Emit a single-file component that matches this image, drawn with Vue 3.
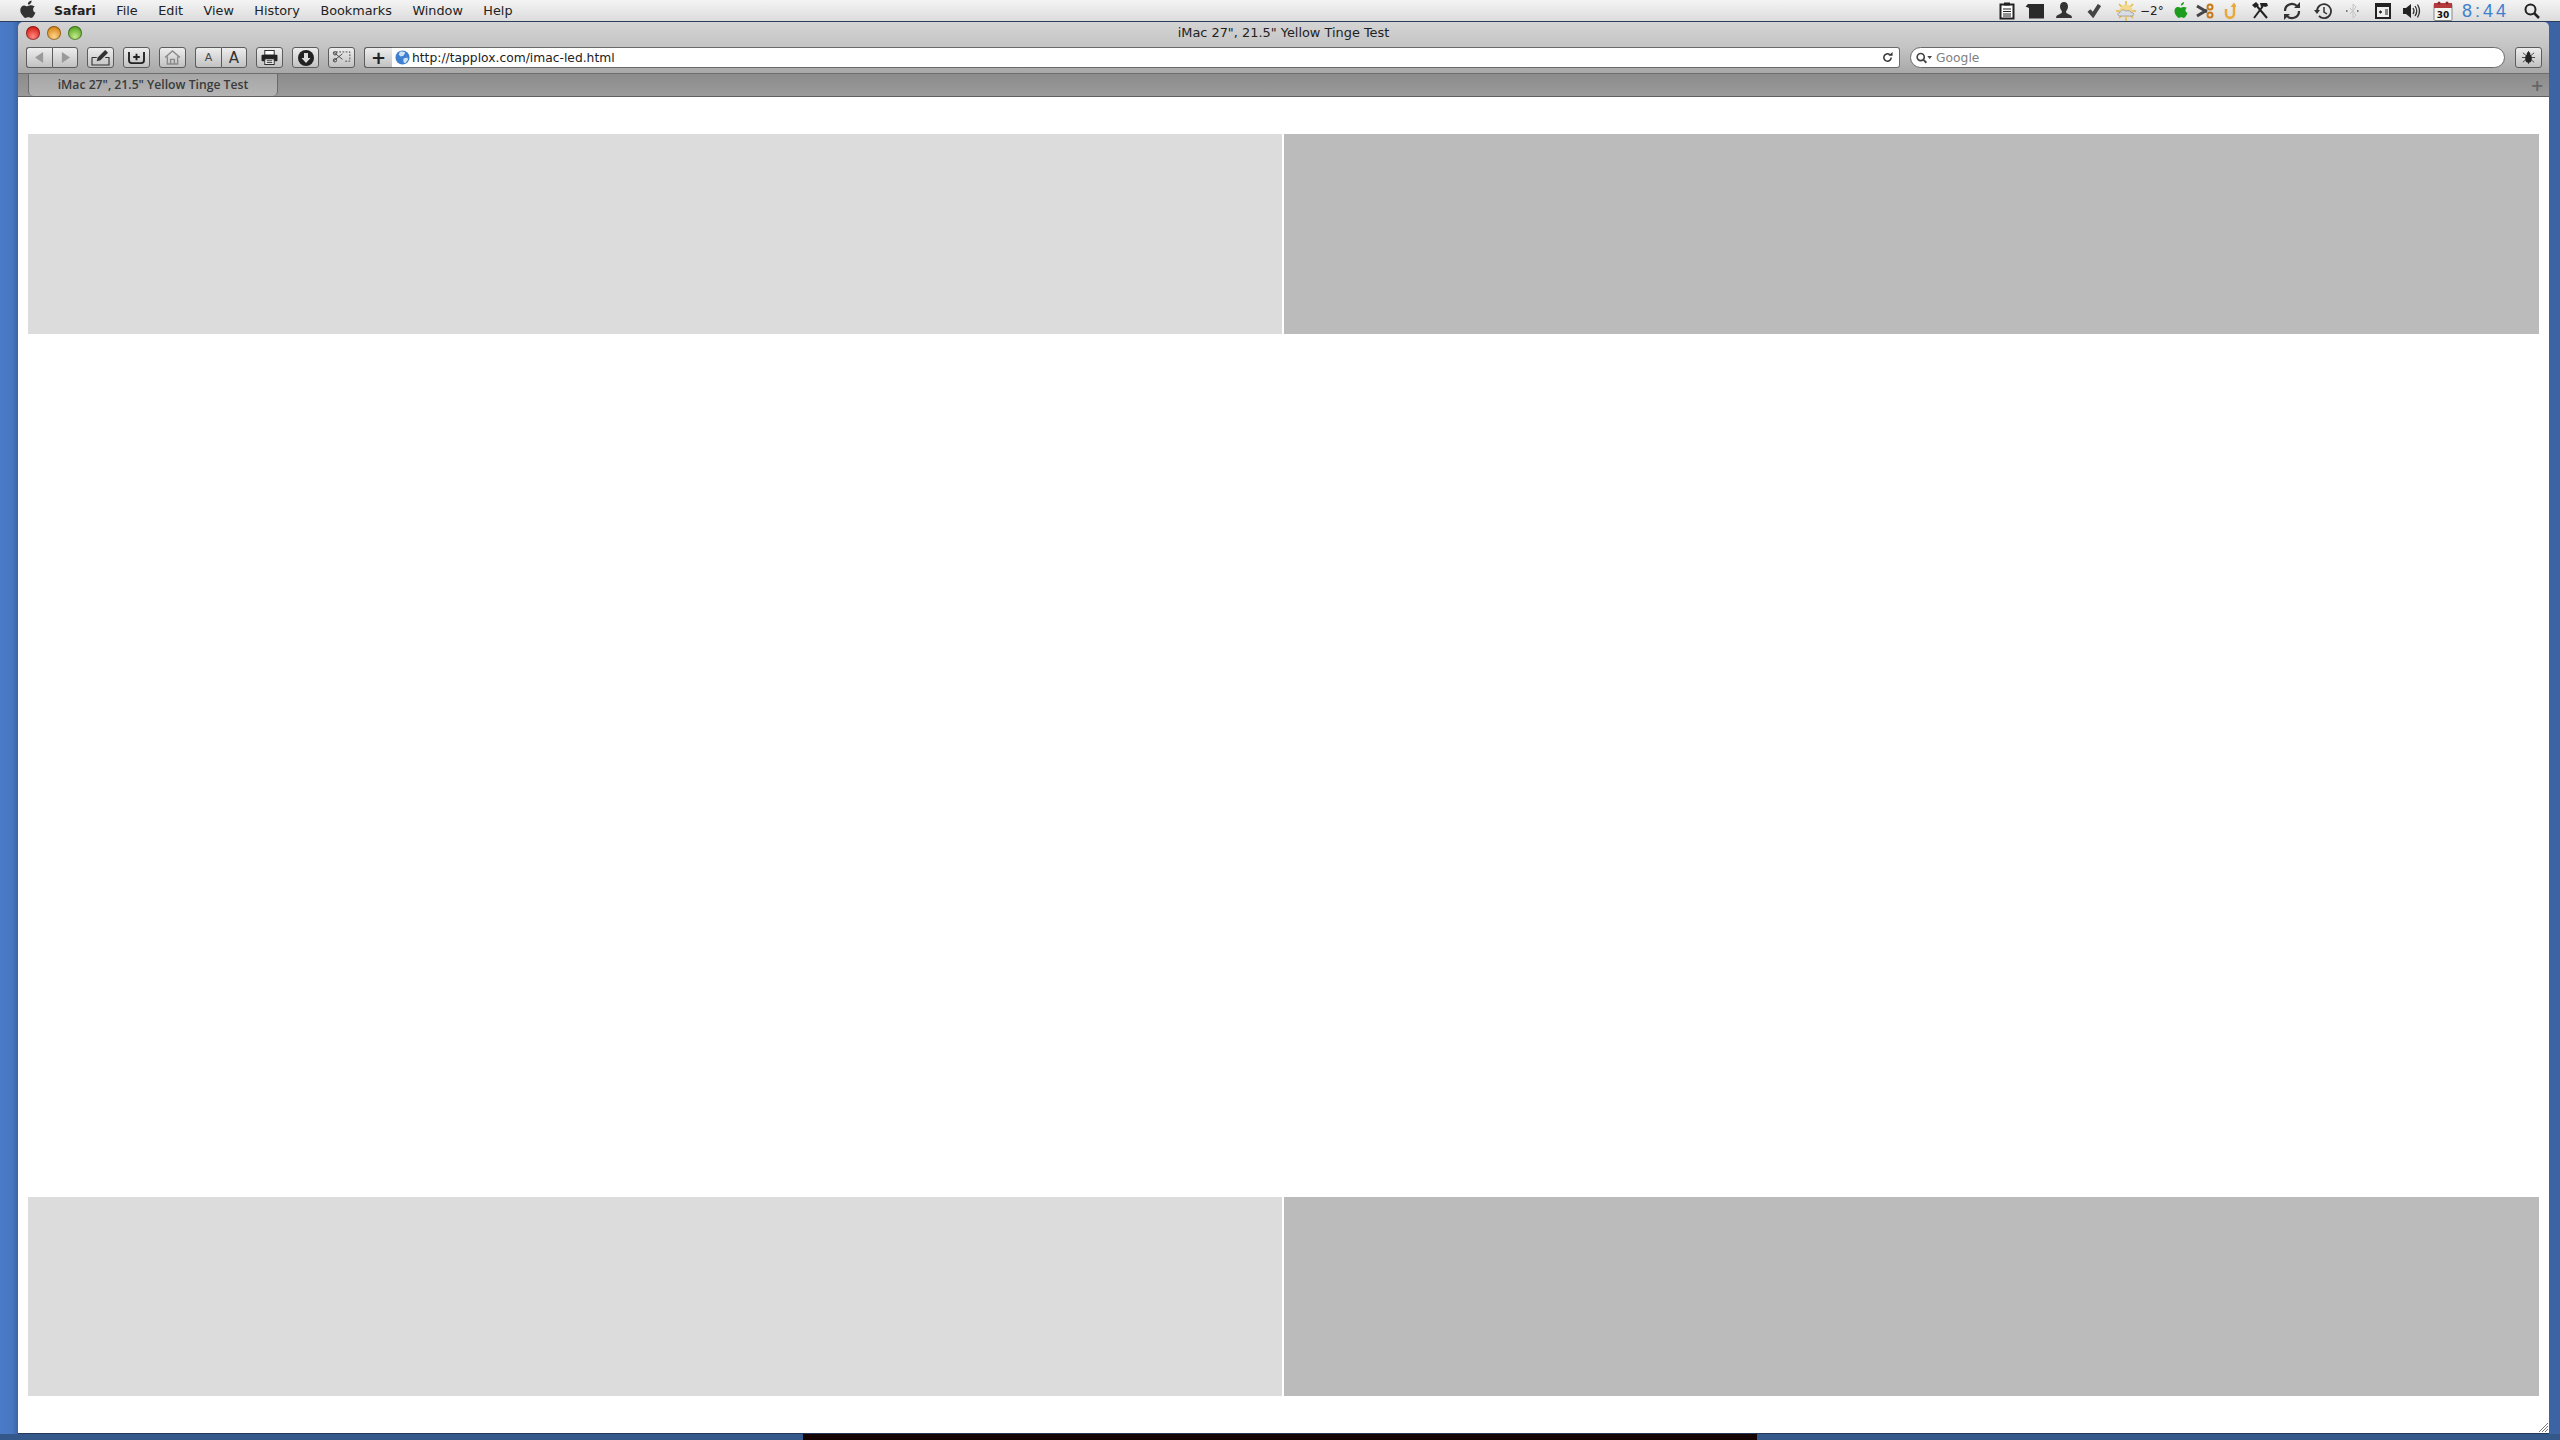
<template>
  <div class="desktop">
    <!-- Menu bar -->
    <header class="menubar">
      <svg class="apple" viewBox="0 0 16 19" width="16" height="19">
        <path fill="#333" d="M11.6 0.4c.1 1.2-.3 2.2-1 3-.7.8-1.700 1.300-2.700 1.200-.1-1.100.4-2.200 1-2.900C9.600 1 10.700.5 11.600.4zM14.800 6.400c-1.100.7-1.700 1.700-1.700 3 0 1.500.9 2.600 2.300 3.200-.4 1.200-.9 2.300-1.700 3.400-.8 1.100-1.500 2-2.600 2-1.100 0-1.500-.7-2.800-.7-1.300 0-1.800.7-2.800.7-1.100 0-1.900-1-2.700-2.200C1 14.100.3 12 .3 10.100c0-3 1.900-4.700 3.900-4.700 1.200 0 2.200.8 3 .8.700 0 1.900-.9 3.300-.9 1 0 2.900.4 4.300 1.100z"/>
      </svg>
      <nav class="menus">
        <span class="menu-app">Safari</span>
        <span v-for="m in menus" :key="m">{{ m }}</span>
      </nav>
      <div class="tray">
        <svg class="ti g0" viewBox="0 0 16 18" width="16" height="18"><rect x="1.500" y="2.500" width="13" height="14" fill="#fff" stroke="#222" stroke-width="2"/><rect x="5" y="0.500" width="6" height="3" fill="#222"/><path stroke="#222" d="M4 7h8M4 9.500h8M4 12h8M4 14h8"/></svg>
        <svg class="ti g10" viewBox="0 0 20 16" width="20" height="16"><path fill="#2a2a2a" d="M3 1h16v14.500H4V5L0.500 3.500z"/></svg>
        <svg class="ti g10" viewBox="0 0 18 18" width="18" height="18"><path fill="#333" d="M9 0c2.500 0 4 2 4 4.500 0 2-1 3.500-2 5 0 1.500 1 2 3 3 2 .8 3 1.500 3 3.500H1c0-2 1-2.700 3-3.500 2-1 3-1.500 3-3-1-1.500-2-3-2-5C5 2 6.500 0 9 0z"/></svg>
        <svg class="ti g14" viewBox="0 0 14 14" width="14" height="14"><path fill="none" stroke="#444" stroke-width="4" d="M2 6.500l4 4.500L12.500 1"/></svg>
        <svg class="ti g15" viewBox="0 0 20 20" width="20" height="20">
          <g stroke="#e3b93f" stroke-width="1.500"><path d="M10 0v20M0 10h20M3 3l14 14M17 3L3 17"/></g>
          <circle cx="10" cy="10" r="6.500" fill="#f2d98c"/>
          <path fill="#d9dde2" stroke="#8f8f8f" stroke-width=".7" d="M4 15c-3 0-3-3.500 0-3.500.5-2.500 4-3.500 6-1.500 2.500-1 5 0 5 1.500 3.500 0 3.500 3.500 1 3.500z"/>
        </svg>
        <span class="temp">−2°</span>
        <svg class="ti g13" viewBox="0 0 14 18" width="14" height="18"><path fill="#1e9c1e" d="M10 0c.1 1-.3 2-.9 2.600-.6.700-1.500 1.100-2.300 1 0-1 .4-1.800.9-2.400C8.300.6 9.300.1 10 0zM13 5.700c-1 .6-1.500 1.500-1.500 2.600 0 1.300.8 2.200 2 2.800-.3 1-.8 2-1.500 3-.7 1-1.300 1.800-2.300 1.800-1 0-1.300-.6-2.400-.6-1.100 0-1.500.6-2.400.6-1 0-1.600-.9-2.300-1.900C1 12.500.5 10.700.5 9c0-2.600 1.600-4 3.300-4 1 0 1.900.7 2.600.7.600 0 1.600-.8 2.900-.8.900 0 2.500.3 3.700.8z"/></svg>
        <svg class="ti g8" viewBox="0 0 18 16" width="18" height="16"><path stroke="#444" stroke-width="3" fill="none" d="M1 3l10 6M1 13l10-6"/><circle cx="14" cy="4" r="2.500" fill="none" stroke="#c77a1a" stroke-width="2"/><circle cx="14" cy="12" r="2.500" fill="none" stroke="#c77a1a" stroke-width="2"/></svg>
        <svg class="ti g10" viewBox="0 0 12 18" width="12" height="18"><path fill="none" stroke="#e8a93a" stroke-width="2.500" d="M2 7v5c0 5 8 5 8 0V3"/><path fill="#e8a93a" d="M6.500 5L10 .5 13 5z"/></svg>
        <svg class="ti g15" viewBox="0 0 18 18" width="18" height="18"><path stroke="#222" stroke-width="2" fill="none" d="M5 3l11 13M12 4L3 16"/><path fill="#222" d="M1 3l4-3 3 3-4 3zM9 1h7l1 3-3 1-2-1-2 1z"/></svg>
        <svg class="ti g14" viewBox="0 0 18 18" width="18" height="18"><g fill="none" stroke="#333" stroke-width="2.200"><path d="M2 9a7 7 0 0 1 12-5"/><path d="M16 9a7 7 0 0 1-12 5"/></g><path fill="#333" d="M11 6h6V0zM7 12H1v6z"/></svg>
        <svg class="ti g13" viewBox="0 0 18 18" width="18" height="18"><path fill="none" stroke="#333" stroke-width="1.800" d="M3 9a7 7 0 1 1 2 5"/><path fill="#333" d="M0 8h6l-3 4z"/><path fill="none" stroke="#333" stroke-width="1.500" d="M10 5v5l3 2"/></svg>
        <svg class="ti g14" viewBox="0 0 14 16" width="14" height="16"><path fill="none" stroke="#c4c4c4" d="M7 1v14l3-3-6-7M7 1l3 3-6 7"/><path stroke="#555" stroke-width="1.500" stroke-dasharray="1.500 1.500" d="M0 8h3M11 8h3"/></svg>
        <svg class="ti g15" viewBox="0 0 16 16" width="16" height="16"><rect x="1" y="1" width="14" height="14" fill="#eee" stroke="#222" stroke-width="2"/><rect x="1" y="1" width="14" height="3" fill="#222"/><path stroke="#222" d="M4 9h3M5.500 7.500v3M4.500 8l2 2M6.500 8l-2 2M10 7h3M10 9h3M10 11h3"/></svg>
        <svg class="ti g12" viewBox="0 0 18 16" width="18" height="16"><path fill="#222" d="M0 5h3l5-4v14l-5-4H0z"/><g fill="none" stroke="#333" stroke-width="1.300"><path d="M10 5q2 3 0 6"/><path d="M12 3q3.500 5 0 10"/><path d="M14.500 1.500q4 6.500 0 13"/></g></svg>
        <svg class="ti g12" viewBox="0 0 20 20" width="20" height="20"><rect x="1" y="3" width="18" height="16.500" rx="1" fill="#f4f4f0" stroke="#888"/><rect x="1" y="2" width="18" height="5" fill="#b5393a"/><circle cx="6" cy="2" r="1.500" fill="#8a2a2a"/><circle cx="14" cy="2" r="1.500" fill="#8a2a2a"/><text x="10" y="17" text-anchor="middle" class="cal-day">30</text></svg>
        <span class="clock">8:44</span>
        <svg class="ti g15" viewBox="0 0 16 16" width="16" height="16"><circle cx="6.500" cy="6.500" r="5" fill="none" stroke="#222" stroke-width="2"/><path stroke="#222" stroke-width="2.500" d="M10 10l5 5"/></svg>
      </div>
    </header>

    <!-- Safari window -->
    <main class="window">
      <div class="titlebar">
        <div class="lights">
          <span class="light red"></span>
          <span class="light amber"></span>
          <span class="light green"></span>
        </div>
        <span class="title">iMac 27", 21.5" Yellow Tinge Test</span>
      </div>

      <div class="toolbar">
        <div class="btn-group nav-group">
          <button class="btn seg"><svg viewBox="0 0 10 12" width="9" height="11"><path fill="#9a9a9a" d="M9 0v12L0 6z"/></svg></button>
          <button class="btn seg"><svg viewBox="0 0 10 12" width="9" height="11"><path fill="#9a9a9a" d="M1 0v12l9-6z"/></svg></button>
        </div>
        <button class="btn"><svg viewBox="0 0 20 18" width="19" height="17"><path fill="none" stroke="#333" stroke-width="1.200" d="M1 9v8h18V9h-4M6 9H1"/><path fill="#333" d="M6 13l1-4 8-8 3 3-8 8z"/></svg></button>
        <button class="btn"><svg viewBox="0 0 20 16" width="19" height="15"><path fill="none" stroke="#222" stroke-width="2" d="M2 2v9c0 2 1 3 3 3h10c2 0 3-1 3-3V2"/><path stroke="#222" stroke-width="2" d="M10 4v7M6.500 7.500h7"/></svg></button>
        <button class="btn"><svg viewBox="0 0 18 16" width="17" height="15"><path fill="none" stroke="#8a8a8a" stroke-width="1.500" d="M1 8l8-7 8 7M3.500 7v8h11V7M7 15v-5h4v5"/></svg></button>
        <div class="btn-group">
          <button class="btn seg small-a">A</button>
          <button class="btn seg big-a">A</button>
        </div>
        <button class="btn"><svg viewBox="0 0 18 16" width="17" height="15"><rect x="4" y="0.500" width="10" height="5" fill="#fff" stroke="#222"/><rect x="0.500" y="5" width="17" height="7" rx="1" fill="#222"/><rect x="4" y="9.500" width="10" height="6" fill="#fff" stroke="#222"/><path stroke="#222" d="M6 11.500h6M6 13.500h6"/></svg></button>
        <button class="btn"><svg viewBox="0 0 16 16" width="16" height="16"><circle cx="8" cy="8" r="8" fill="#222"/><path fill="#ddd" d="M6 3h4v5h2.500L8 13 3.500 8H6z"/></svg></button>
        <button class="btn"><svg viewBox="0 0 20 14" width="19" height="13"><path fill="none" stroke="#444" stroke-dasharray="2 1.500" d="M4 1h15v10h-5"/><path fill="none" stroke="#444" d="M1 1l10 8M1 11l10-8"/><circle cx="3" cy="2.500" r="1.800" fill="none" stroke="#444"/><circle cx="3" cy="10" r="1.800" fill="none" stroke="#444"/></svg></button>

        <div class="address">
          <button class="btn plus">+</button>
          <div class="url-field">
            <svg class="globe" viewBox="0 0 16 16" width="15" height="15"><circle cx="8" cy="8" r="7.500" fill="#3f7fcf"/><path fill="#cfe3f7" d="M5 2c3-1 5 0 6 1L9 6 6 7 4 5zM9 9l4-1 1 2-3 4-2-1z"/></svg>
            <span class="url">http://tapplox.com/imac-led.html</span>
            <svg class="reload" viewBox="0 0 12 12" width="11" height="11"><path fill="none" stroke="#333" stroke-width="1.600" d="M10 6a4 4 0 1 1-1.500-3.100"/><path fill="#333" d="M7 4h4.500V0z"/></svg>
          </div>
        </div>

        <div class="search-field">
          <svg class="mag" viewBox="0 0 18 12" width="17" height="12"><circle cx="5" cy="5" r="3.800" fill="none" stroke="#444" stroke-width="1.700"/><path stroke="#444" stroke-width="2" d="M8 8l3 3"/><path fill="#444" d="M12 4h5l-2.500 3z"/></svg>
          <span class="placeholder">Google</span>
        </div>

        <button class="btn bug"><svg viewBox="0 0 16 16" width="15" height="15"><g stroke="#444"><path d="M8 1v14M2 3l12 10M14 3L2 13M1 8h14"/></g><ellipse cx="8" cy="9" rx="3.500" ry="4.500" fill="#222"/><circle cx="8" cy="4" r="2" fill="#222"/></svg></button>
      </div>

      <div class="tabbar">
        <div class="tab">iMac 27", 21.5" Yellow Tinge Test</div>
        <span class="new-tab">+</span>
      </div>

      <!-- Page: yellow tinge test bands -->
      <section class="page">
        <div class="band">
          <div class="swatch light-gray"></div>
          <div class="swatch mid-gray"></div>
        </div>
        <div class="band">
          <div class="swatch light-gray"></div>
          <div class="swatch mid-gray"></div>
        </div>
        <svg class="grip" viewBox="0 0 12 12" width="12" height="12"><path stroke="#777" d="M11 2L2 11M11 5l-6 6M11 8l-3 3"/></svg>
      </section>
    </main>

    <div class="dock-edge">
      <div class="dark-strip"></div>
    </div>
  </div>
</template>

<script setup>
const menus = ['File', 'Edit', 'View', 'History', 'Bookmarks', 'Window', 'Help']
</script>

<style>
html,
body {
  margin: 0;
  background: #4a7cc6;
}
</style>

<style scoped>
.desktop {
  width: 2560px;
  height: 1440px;
  overflow: hidden;
  display: flex;
  flex-direction: column;
  background: linear-gradient(90deg, #4a7bc8 0, #4877c2 12px, #3c64a4 18px);
  font-family: "DejaVu Sans", "Noto Sans", sans-serif;
}

.menubar {
  height: 22px;
  box-sizing: border-box;
  flex-shrink: 0;
  display: flex;
  align-items: center;
  padding-left: 20px;
  background: linear-gradient(#f4f4f4, #dcdcdc);
  border-bottom: 1px solid #2a3d5c;
  font-size: 12.800px;
  color: #222;
}

.apple {
  margin-top: -2px;
}

.menus {
  display: flex;
  gap: 20.500px;
  margin-left: 18px;
}

.menu-app {
  font-weight: 700;
  font-size: 12.500px;
}

.tray {
  margin-left: auto;
  padding-right: 20px;
  display: flex;
  align-items: center;
}

.ti {
  flex-shrink: 0;
  display: block;
}

.g0 { margin-left: 0; }
.g8 { margin-left: 8px; }
.g10 { margin-left: 10px; }
.g12 { margin-left: 12px; }
.g13 { margin-left: 13px; }
.g14 { margin-left: 14px; }
.g15 { margin-left: 15px; }

.temp {
  margin-left: 4px;
  width: 21px;
  flex-shrink: 0;
  font-size: 12px;
  white-space: nowrap;
}

.cal-day {
  font-size: 9px;
  font-weight: 700;
  fill: #111;
}

.clock {
  margin-left: 9px;
  flex-shrink: 0;
  font-family: "Liberation Sans", sans-serif;
  font-size: 18px;
  line-height: 20px;
  letter-spacing: 3px;
  color: #3f7fcc;
  white-space: nowrap;
}

.window {
  width: 2531px;
  height: 1412px;
  flex-shrink: 0;
  margin-left: 18px;
  display: flex;
  flex-direction: column;
  box-sizing: border-box;
  border-bottom: 1px solid #24385a;
  border-radius: 5px 5px 0 0;
  overflow: hidden;
}

.titlebar {
  height: 25px;
  flex-shrink: 0;
  position: relative;
  display: flex;
  align-items: center;
  justify-content: center;
  box-sizing: border-box;
  padding-bottom: 4px;
  background: linear-gradient(#d4d4d4, #c4c4c4);
  font-size: 12.900px;
  color: #222;
}

.lights {
  position: absolute;
  left: 8px;
  top: 4px;
  display: flex;
  gap: 7px;
}

.light {
  width: 14px;
  height: 14px;
  border-radius: 50%;
  box-shadow: inset 0 0 0 1px rgba(0, 0, 0, 0.35);
}

.red { background: radial-gradient(circle at 50% 75%, #ff8a80, #d8241c 70%); }
.amber { background: radial-gradient(circle at 50% 75%, #ffd58a, #d98a1e 70%); }
.green { background: radial-gradient(circle at 50% 75%, #c4ec8a, #5da82a 70%); }

.toolbar {
  height: 27px;
  flex-shrink: 0;
  display: flex;
  align-items: flex-start;
  gap: 9px;
  padding-left: 8px;
  background: linear-gradient(#c4c4c4, #a8a8a8);
  border-bottom: 1px solid #6e6e6e;
  box-sizing: border-box;
}

.btn {
  width: 27px;
  height: 21px;
  padding: 0;
  flex-shrink: 0;
  display: flex;
  align-items: center;
  justify-content: center;
  box-sizing: border-box;
  border: 1px solid #5c5c5c;
  border-radius: 3px;
  background: linear-gradient(#ededed, #c2c2c2);
  font-family: "DejaVu Sans", sans-serif;
  color: #222;
}

.btn-group {
  display: flex;
  flex-shrink: 0;
}

.btn.seg {
  width: 26px;
  border-radius: 0;
}

.btn-group .seg:first-child {
  border-radius: 3px 0 0 3px;
  border-right: 0;
}

.btn-group .seg:last-child {
  border-radius: 0 3px 3px 0;
}

.small-a { font-size: 11px; color: #444; }
.big-a { font-size: 15px; color: #333; }

.address {
  flex: 0 0 1536px;
  display: flex;
}

.btn.plus {
  width: 28px;
  font-size: 18px;
  font-weight: 700;
  border-radius: 3px 0 0 3px;
  border-right: 0;
}

.url-field,
.search-field {
  height: 21px;
  display: flex;
  align-items: center;
  background: #fff;
  box-sizing: border-box;
  border: 1px solid #6a6a6a;
  font-size: 12.300px;
}

.url-field {
  flex: 1;
  border-left: 0;
  border-radius: 0 3px 3px 0;
  padding: 0 6px 0 3px;
}

.globe {
  flex-shrink: 0;
}

.url {
  margin-left: 2px;
  color: #222;
  white-space: nowrap;
}

.reload {
  margin-left: auto;
}

.search-field {
  flex: 0 0 595px;
  margin-left: 1px;
  border-radius: 11px;
  padding-left: 5px;
}

.placeholder {
  margin-left: 3px;
  color: #808080;
}

.btn.bug {
  margin-left: 1px;
}

.tabbar {
  height: 23px;
  flex-shrink: 0;
  display: flex;
  align-items: stretch;
  justify-content: space-between;
  box-sizing: border-box;
  padding: 0 5px 0 10px;
  background: linear-gradient(#8c8c8c, #9a9a9a);
  border-bottom: 1px solid #5f5f5f;
}

.tab {
  width: 250px;
  box-sizing: border-box;
  display: flex;
  align-items: center;
  justify-content: center;
  padding-bottom: 2px;
  background: linear-gradient(#a6a6a6, #b4b4b4);
  border-left: 1px solid #6a6a6a;
  border-right: 1px solid #6a6a6a;
  border-radius: 0 0 5px 5px;
  font-family: "Open Sans", sans-serif;
  font-size: 12.200px;
  font-weight: 600;
  color: #3a3a3a;
  white-space: nowrap;
}

.new-tab {
  align-self: center;
  font-size: 16px;
  font-weight: 700;
  color: #666;
}

.page {
  flex: 1;
  position: relative;
  display: flex;
  flex-direction: column;
  justify-content: space-between;
  padding: 37px 10px 37px 10px;
  background: #fff;
}

.band {
  display: grid;
  grid-template-columns: 1254px 1255px;
  column-gap: 2px;
  height: 200px;
}

.band + .band {
  height: 199px;
}

.light-gray { background: #dcdcdc; }
.mid-gray { background: #bbbbbb; }

.grip {
  position: absolute;
  right: 0;
  bottom: 0;
}

.dock-edge {
  flex: 1;
  display: flex;
  justify-content: center;
  background: #35588a;
}

.dark-strip {
  width: 954px;
  background: #140404;
}
</style>
